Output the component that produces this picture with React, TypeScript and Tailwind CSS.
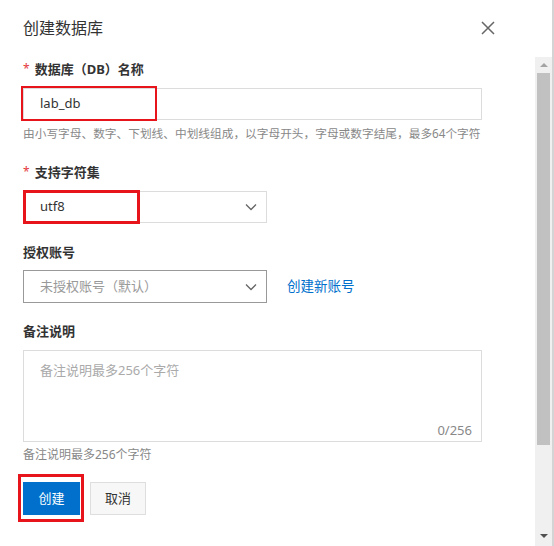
const font = { fontFamily: '"Noto Sans", "Noto Sans CJK SC", sans-serif' };

const Chevron = () => (
  <svg width="12" height="8" viewBox="0 0 12 8" fill="none">
    <path d="M1 1.5L6 6.5L11 1.5" stroke="#666" strokeWidth="1.3" />
  </svg>
);

const Label = ({ text, required }: { text: string; required?: boolean }) => (
  <div className="flex h-5 items-center text-[13px] font-bold leading-5 text-[#333]">
    {required && <span className="mr-[5px] text-[12px] font-normal text-[#e4393c]">*</span>}
    {text}
  </div>
);

const App = () => {
  return (
    <div className="flex h-[546px] w-[554px] flex-col overflow-hidden border-r-2 border-[#d4d4d4] bg-white" style={font}>
      <div className="flex h-[57px] shrink-0 items-center justify-between pl-[23px] pr-[57px]">
        <div className="pb-[1px] text-[16px] leading-6 text-[#333]">创建数据库</div>
        <svg width="14" height="14" viewBox="0 0 14 14" className="mb-[1px]">
          <path d="M1 1L13 13M13 1L1 13" stroke="#666" strokeWidth="1.5" />
        </svg>
      </div>

      <div className="flex min-h-0 flex-1">
        <div className="flex-1 pl-[23px] pr-[53px] pt-[2px]">
          <Label text="数据库（DB）名称" required />
          <div className="relative mt-[9px]">
            <div className="flex h-[32px] items-center border border-[#dcdcdc] pl-[16px] text-[13px] text-[#333]">
              lab_db
            </div>
            <div className="absolute -left-[2px] -top-[2px] h-[35px] w-[136px] border-2 border-[#e8141b]" />
          </div>
          <div className="mt-[4px] text-[11.7px] leading-[18px] whitespace-nowrap text-[#888]">
            由小写字母、数字、下划线、中划线组成，以字母开头，字母或数字结尾，最多64个字符
          </div>

          <div className="mt-[20px]">
            <Label text="支持字符集" required />
          </div>
          <div className="relative mt-[9px] w-[244px]">
            <div className="flex h-[32px] items-center justify-between border border-[#dcdcdc] pl-[16px] pr-[9px] text-[13px] text-[#333]">
              <span>utf8</span>
              <Chevron />
            </div>
            <div className="absolute left-0 -top-[1px] h-[34px] w-[117px] border-[3px] border-[#e8141b]" />
          </div>

          <div className="mt-[19px]">
            <Label text="授权账号" />
          </div>
          <div className="mt-[8px] flex items-center gap-[20px]">
            <div className="flex h-[33px] w-[244px] items-center justify-between border border-[#999] pl-[16px] pr-[9px] text-[13px] text-[#999]">
              <span>未授权账号（默认）</span>
              <Chevron />
            </div>
            <a className="text-[13.5px] text-[#0070cc]">创建新账号</a>
          </div>

          <div className="mt-[18px]">
            <Label text="备注说明" />
          </div>
          <div className="mt-[9px] flex h-[92px] flex-col justify-between border border-[#dcdcdc] pb-[1px] pl-[16px] pr-[9px] pt-[9px]">
            <div className="text-[13px] leading-5 text-[#aaa]">备注说明最多256个字符</div>
            <div className="self-end text-[13px] leading-5 text-[#888]">0/256</div>
          </div>
          <div className="mt-[4px] text-[12px] leading-[18px] text-[#888]">备注说明最多256个字符</div>

          <div className="mt-[18px] flex items-center gap-[10px]">
            <div className="relative">
              <button className="flex h-[33px] w-[57px] items-center justify-center bg-[#0070cc] text-[13px] text-white">
                创建
              </button>
              <div className="absolute -left-[5px] -top-[8px] h-[48px] w-[66px] border-[3px] border-[#e8141b]" />
            </div>
            <button className="flex h-[33px] w-[56px] items-center justify-center border border-[#dedede] bg-[#f7f7f7] text-[13px] text-[#333]">
              取消
            </button>
          </div>
        </div>

        <div className="flex w-[17px] shrink-0 flex-col bg-[#f0f0f0]">
          <div className="flex h-[16px] items-center justify-center">
            <svg width="8" height="4" viewBox="0 0 8 4"><path d="M0 4L4 0L8 4Z" fill="#a3a3a3" /></svg>
          </div>
          <div className="mx-[2px] h-[372px] bg-[#c1c1c1]" />
          <div className="flex-1" />
          <div className="flex h-[16px] items-center justify-center pb-[4px]">
            <svg width="8" height="4" viewBox="0 0 8 4"><path d="M0 0L8 0L4 4Z" fill="#505050" /></svg>
          </div>
        </div>
      </div>
    </div>
  );
};

export default App;
